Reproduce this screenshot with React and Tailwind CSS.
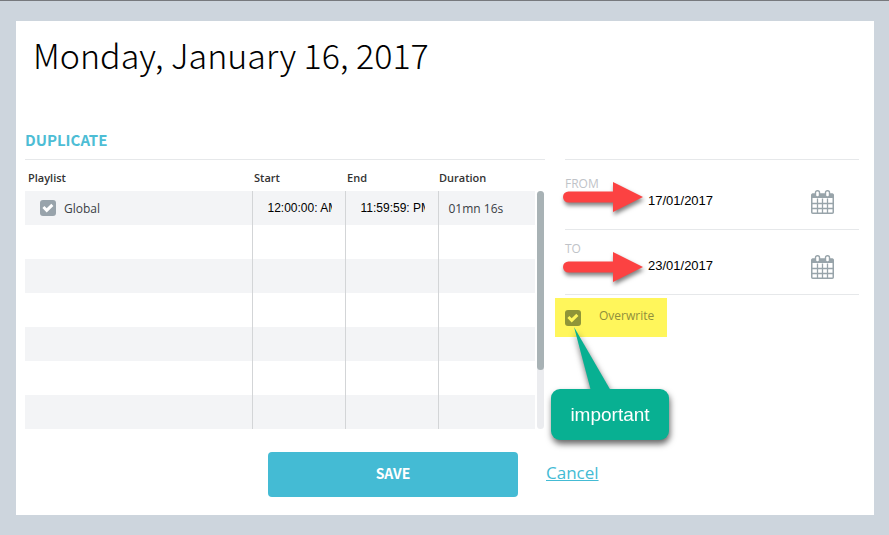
import React from "react";

const playlists = [
  { name: "Global", start: "12:00:00: AM", end: "11:59:59: PM", duration: "01mn 16s" },
];
const emptyRows = [1, 2, 3, 4, 5, 6];

const OPEN = "font-['Open_Sans','Noto_Sans',sans-serif]";
const SOURCE = "font-['Noto_Sans_CJK_JP','Noto_Sans',sans-serif]";
const ARIAL = "font-['Liberation_Sans',sans-serif]";

function Tick({ id, boxClass, checkClass, label }) {
  return (
    <span className="relative block size-4">
      <input
        id={id}
        type="checkbox"
        defaultChecked
        aria-label={label}
        className={`block size-4 appearance-none rounded-[3px] ${boxClass}`}
      />
      <svg viewBox="0 0 16 16" className={`pointer-events-none absolute inset-0 size-4 ${checkClass}`}>
        <path d="M2.4 8.1 4.4 6.1 6.7 8.3 11.3 3.8 13.4 5.9 6.7 12.4z" fill="currentColor" />
      </svg>
    </span>
  );
}

function CalendarIcon() {
  return (
    <svg viewBox="0 0 23 24" className="h-6 w-[23px]" fill="none" stroke="#98a4aa">
      <path d="M1.500 3.500h20a1 1 0 0 1 1 1V8H.5V4.500a1 1 0 0 1 1-1z" fill="#98a4aa" stroke="none" />
      <rect x="0.75" y="4.250" width="21.500" height="19" rx="1" strokeWidth="1.500" />
      <path d="M6.500 8.500V23M11.500 8.500V23M16.500 8.500V23M1 13.500h21M1 18.500h21" strokeWidth="1.300" />
      <rect x="4.500" y="0.700" width="4" height="6.300" rx="1.800" fill="#fff" strokeWidth="1.400" />
      <rect x="14.500" y="0.700" width="4" height="6.300" rx="1.800" fill="#fff" strokeWidth="1.400" />
    </svg>
  );
}

function Arrow() {
  return (
    <svg
      viewBox="0 0 82 32"
      className="pointer-events-none absolute -left-0.5 top-[21px] h-8 w-[82px] drop-shadow-[1px_3px_2px_rgba(0,0,0,0.5)]"
    >
      <path d="M5.500 10.500H50V1L80 16 50 31V21.500H5.500a5.500 5.500 0 0 1 0-11z" fill="#fc4242" />
    </svg>
  );
}

function DateField({ id, label, value, rowClass }) {
  return (
    <div className={`relative flex items-start border-b border-[#e6e8ea] ${rowClass}`}>
      <label htmlFor={id} className={`w-[83px] shrink-0 text-[12px] leading-4 text-[#c0c3c8] ${OPEN}`}>
        {label}
      </label>
      <input
        id={id}
        type="text"
        defaultValue={value}
        className={`mt-[17px] h-4 w-24 min-w-0 flex-1 bg-transparent text-[13px] leading-4 text-black outline-none ${ARIAL}`}
      />
      <button type="button" aria-label={`Pick ${label.toLowerCase()} date`} className="mr-[25px] mt-3.5">
        <CalendarIcon />
      </button>
      <Arrow />
    </div>
  );
}

export default function App() {
  return (
    <div className="flex min-h-screen flex-col border-t border-[#77797d] bg-[#cdd5dd] pb-5 pl-4 pr-[15px] pt-5">
      <main className="flex grow flex-col bg-white pb-[18px] pl-[9px] pr-[15px]">
        <h1 className={`pl-2 pt-2 text-[34px] font-light leading-[52px] text-black ${SOURCE}`}>
          Monday, January 16, 2017
        </h1>
        <h2 className={`mt-[49px] pb-[9px] text-[15px] font-bold leading-5 text-[#4dbdd5] ${SOURCE}`}>DUPLICATE</h2>

        <div className="grid grid-cols-[520fr_294fr] gap-5">
          <section className="border-t border-[#e6e8ea]">
            <div className="flex gap-0.5">
              <table className={`grow table-fixed border-collapse text-left text-[12px] text-[#3a4045] ${OPEN}`}>
                <colgroup>
                  <col />
                  <col className="w-[93px]" />
                  <col className="w-[93px]" />
                  <col className="w-[97px]" />
                </colgroup>
                <thead>
                  <tr className="h-[31px] text-[11px] text-[#333]">
                    <th className="px-[3px] pt-1.5 font-semibold">Playlist</th>
                    <th className="px-0.5 pt-1.5 font-semibold">Start</th>
                    <th className="px-0.5 pt-1.5 font-semibold">End</th>
                    <th className="px-px pt-1.5 font-semibold">Duration</th>
                  </tr>
                </thead>
                <tbody>
                  {playlists.map((p) => (
                    <tr key={p.name} className="h-[34px] bg-[#f3f4f6]">
                      <td className="p-0">
                        <label className="flex items-center gap-2 pl-[15px]">
                          <Tick label={p.name} boxClass="bg-[#98a3ab]" checkClass="text-white" />
                          <span className="pt-0.5">{p.name}</span>
                        </label>
                      </td>
                      <td className="border-l border-[#d3d5d7] p-0 pl-[15px]">
                        <input aria-label="Start" defaultValue={p.start} className={`block w-16 bg-transparent text-[12px] leading-4 text-black ${ARIAL}`} />
                      </td>
                      <td className="border-l border-[#d3d5d7] p-0 pl-[15px]">
                        <input aria-label="End" defaultValue={p.end} className={`block w-16 bg-transparent text-[12px] leading-4 text-black ${ARIAL}`} />
                      </td>
                      <td className="border-l border-[#d3d5d7] p-0 pl-2.5 pt-0.5">{p.duration}</td>
                    </tr>
                  ))}
                  {emptyRows.map((n) => (
                    <tr key={n} className="h-[34px] even:bg-white odd:bg-[#f3f4f6]">
                      <td className="p-0" />
                      <td className="border-l border-[#d3d5d7] p-0" />
                      <td className="border-l border-[#d3d5d7] p-0" />
                      <td className="border-l border-[#d3d5d7] p-0" />
                    </tr>
                  ))}
                </tbody>
              </table>
              <div className="flex flex-col pr-px pt-[31px]">
                <div className="w-[7px] grow rounded-sm bg-[#ebecef]">
                  <div className="h-3/4 rounded-sm bg-[#a8b2b5]" />
                </div>
              </div>
            </div>
          </section>

          <section className="border-t border-[#e6e8ea]">
            <DateField id="from" label="FROM" value="17/01/2017" rowClass="h-[70px] pt-4" />
            <DateField id="to" label="TO" value="23/01/2017" rowClass="h-[65px] pt-[11px]" />
            <div className="relative -ml-2.5 mt-[3px] flex h-[39px] w-28 items-center bg-[#fff65b] pl-2.5">
              <Tick id="overwrite" label="Overwrite" boxClass="bg-[#8f9538]" checkClass="text-[#fff65b]" />
              <label htmlFor="overwrite" className={`pb-1 pl-[18px] text-[12px] leading-4 text-[#8f8f3c] ${OPEN}`}>
                Overwrite
              </label>
              <div className="absolute -left-1 top-[91px] h-[51px] w-[118px] drop-shadow-[1px_4px_3px_rgba(0,0,0,0.6)]">
                <svg viewBox="0 0 40 64" className="absolute -top-[62px] left-[22px] h-16 w-10">
                  <path d="M1 0 38 64H18z" fill="#08b092" />
                </svg>
                <p className={`relative rounded-[9px] bg-[#08b092] text-center text-[19px] leading-[51px] text-white ${ARIAL}`}>
                  important
                </p>
              </div>
            </div>
          </section>
        </div>

        <div className="mt-[23px] flex items-center gap-7 pl-[243px]">
          <button type="button" className={`h-[45px] w-[250px] rounded bg-[#44bbd4] pb-0.5 text-[14px] font-bold text-white ${SOURCE}`}>
            SAVE
          </button>
          <a href="#cancel" className={`pb-1 text-[17px] leading-6 text-[#44bbd4] underline ${OPEN}`}>
            Cancel
          </a>
        </div>
      </main>
    </div>
  );
}
